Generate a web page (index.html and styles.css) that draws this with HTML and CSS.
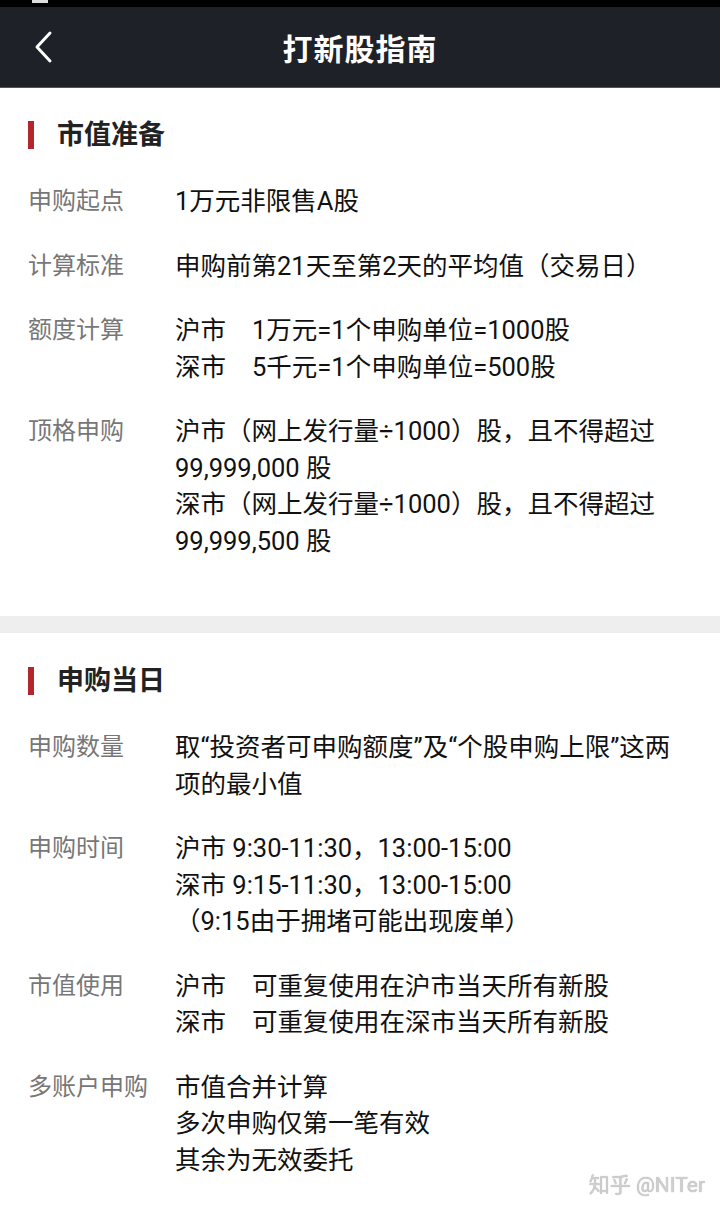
FILE: index.html
```html
<!DOCTYPE html>
<html lang="zh-CN">
<head>
  <meta charset="UTF-8" />
  <meta name="viewport" content="width=device-width, initial-scale=1.0"/>
  <title>打新股指南</title>
  <link rel="stylesheet" href="styles.css">
</head>
<body>
  <div class="status-bar"><span class="status-icon"></span></div>

  <header class="top-bar">
    <a class="back" href="#">
      <svg width="22" height="34" viewBox="0 0 22 34">
        <path d="M18 3 L5 17 L18 31" fill="none" stroke="#fff" stroke-width="3" stroke-linecap="round" stroke-linejoin="round"/>
      </svg>
    </a>
    <h1>打新股指南</h1>
  </header>

  <section class="guide-section first">
    <h2 class="section-title">市值准备</h2>
    <div class="row">
      <div class="label">申购起点</div>
      <div class="value">1万元非限售A股</div>
    </div>
    <div class="row">
      <div class="label">计算标准</div>
      <div class="value">申购前第21天至第2天的平均值（交易日）</div>
    </div>
    <div class="row">
      <div class="label">额度计算</div>
      <div class="value">
        <p><span class="mkt">沪市</span>1万元=1个申购单位=1000股</p>
        <p><span class="mkt">深市</span>5千元=1个申购单位=500股</p>
      </div>
    </div>
    <div class="row">
      <div class="label">顶格申购</div>
      <div class="value">
        <p>沪市（网上发行量÷1000）股，且不得超过 99,999,000 股</p>
        <p>深市（网上发行量÷1000）股，且不得超过 99,999,500 股</p>
      </div>
    </div>
  </section>

  <div class="gap-band"></div>

  <section class="guide-section">
    <h2 class="section-title">申购当日</h2>
    <div class="row">
      <div class="label">申购数量</div>
      <div class="value">取“投资者可申购额度”及“个股申购上限”这两项的最小值</div>
    </div>
    <div class="row">
      <div class="label">申购时间</div>
      <div class="value">
        <p>沪市 9:30-11:30，13:00-15:00</p>
        <p>深市 9:15-11:30，13:00-15:00</p>
        <p>（9:15由于拥堵可能出现废单）</p>
      </div>
    </div>
    <div class="row">
      <div class="label">市值使用</div>
      <div class="value">
        <p><span class="mkt">沪市</span>可重复使用在沪市当天所有新股</p>
        <p><span class="mkt">深市</span>可重复使用在深市当天所有新股</p>
      </div>
    </div>
    <div class="row">
      <div class="label">多账户申购</div>
      <div class="value">
        <p>市值合并计算</p>
        <p>多次申购仅第一笔有效</p>
        <p>其余为无效委托</p>
      </div>
    </div>
  </section>

  <div class="watermark">知乎 @NITer</div>
</body>
</html>
```

FILE: styles.css
```css
* {
  box-sizing: border-box;
  margin: 0;
  padding: 0;
}

body {
  font-family: Roboto, "Noto Sans CJK SC", sans-serif;
  background: #fff;
  color: #111;
  width: 720px;
  min-height: 1213px;
  position: relative;
  overflow: hidden;
}

.status-bar {
  height: 7px;
  background: #000;
  position: relative;
}

.status-icon {
  position: absolute;
  left: 32px;
  top: 0;
  width: 16px;
  height: 3px;
  background: #ddd;
}

.top-bar {
  height: 81px;
  background: #1f2128;
  border-bottom: 1px solid #555;
  display: flex;
  align-items: center;
  justify-content: center;
  position: relative;
}

.top-bar h1 {
  color: #fff;
  font-size: 30px;
  font-weight: 700;
  letter-spacing: 1px;
}

.back {
  position: absolute;
  left: 32px;
  top: 23px;
  display: flex;
}

.guide-section {
  padding: 28px 28px 57px;
  display: flex;
  flex-direction: column;
  gap: 28px;
}

.guide-section.first {
  padding-top: 27px;
}

.section-title {
  font-size: 27px;
  font-weight: 700;
  color: #222;
  line-height: 40px;
  display: flex;
  align-items: center;
  gap: 23px;
}

.section-title::before {
  content: "";
  width: 6px;
  height: 28px;
  background: #b3262c;
}

.row {
  display: flex;
  line-height: 36.5px;
}

.label {
  width: 147px;
  flex-shrink: 0;
  font-size: 24px;
  color: #777;
}

.value {
  flex: 1;
  font-size: 25.5px;
  color: #111;
}

.mkt {
  margin-right: 26px;
}

.gap-band {
  height: 17px;
  background: #eee;
}

/* site mark pinned to the lower right of the viewport */
.watermark {
  position: fixed;
  right: 15px;
  bottom: 17px;
  font-size: 21px;
  line-height: 1;
  color: #cfcfcf;
  text-shadow: 0 0 1px #999;
}
```
